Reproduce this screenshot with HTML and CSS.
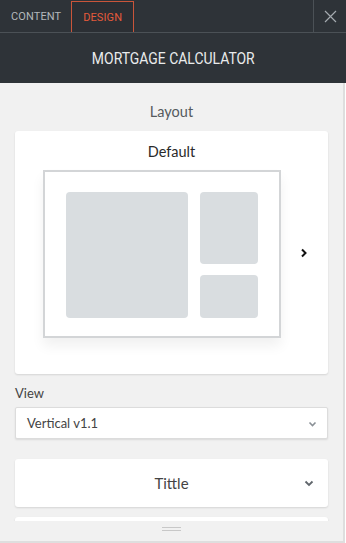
FILE: index.html
```html
<!DOCTYPE html>
<html>
<head>
<meta charset="utf-8">
<link rel="stylesheet" href="styles.css">
</head>
<body>
<div class="panel">
  <div class="tabs">
    <div class="tab">CONTENT</div>
    <div class="tab tab-active">DESIGN</div>
    <div class="tabs-spacer"></div>
    <div class="close">
      <svg width="13" height="13" viewBox="0 0 13 13"><path d="M1 1L12 12M12 1L1 12" stroke="#a4aaaf" stroke-width="1.2" fill="none"/></svg>
    </div>
  </div>
  <div class="title"><span class="title-text">MORTGAGE CALCULATOR</span></div>
  <div class="body">
    <div class="section-label">Layout</div>
    <div class="card layout-card">
      <div class="layout-name">Default</div>
      <div class="preview-row">
        <div class="preview">
          <div class="blk blk-main"></div>
          <div class="blk-col">
            <div class="blk blk-top"></div>
            <div class="blk blk-bottom"></div>
          </div>
        </div>
        <div class="next">
          <svg width="8" height="10" viewBox="0 0 8 10"><path d="M2 1.5L5.5 5L2 8.5" stroke="#111" stroke-width="2" fill="none"/></svg>
        </div>
      </div>
    </div>
    <div class="field-label">View</div>
    <div class="select">
      <span>Vertical v1.1</span>
      <svg width="9" height="6" viewBox="0 0 9 6"><path d="M1.5 1.5L4.5 4.5L7.5 1.5" stroke="#8a9096" stroke-width="1.6" fill="none"/></svg>
    </div>
    <div class="card acc">
      <span class="acc-title">Tittle</span>
      <svg class="acc-chev" width="10" height="7" viewBox="0 0 10 7"><path d="M1.5 1.5L5 5L8.5 1.5" stroke="#60666c" stroke-width="1.8" fill="none"/></svg>
    </div>
    <div class="card acc-next"></div>
    <div class="handle-bar"><div class="handle"></div></div>
  </div>
</div>
</body>
</html>
```
FILE: styles.css
```css
* { box-sizing: border-box; }
html, body { margin: 0; padding: 0; }
body { width: 346px; height: 543px; overflow: hidden; background: #fff; font-family: Lato, "Noto Sans", sans-serif; }
.panel { width: 346px; height: 543px; display: flex; flex-direction: column; }
.tabs { height: 33px; flex-shrink: 0; background: #2e3338; border-bottom: 1px solid #4b5156; display: flex; align-items: stretch; padding-top: 1px; }
.tab { font-family: Roboto, sans-serif; font-size: 11px; color: #b3b8bc; padding: 0 11px; display: flex; align-items: center; letter-spacing: 0.1px; }
.tab-active { color: #e35a3b; border: 1px solid #c9553a; border-bottom: none; margin-left: -1px; padding: 0 11px; background: #2b2f34; }
.tabs-spacer { flex: 1; }
.close { width: 33px; border-left: 1px solid #4b5156; display: flex; align-items: center; justify-content: center; margin-top: -1px; }
.title { height: 50px; flex-shrink: 0; background: #2e3338; display: flex; align-items: center; justify-content: center; }
.title-text { display: inline-block; font-family: Roboto, sans-serif; font-size: 17px; color: #e9ebec; transform: scaleX(0.82); letter-spacing: 0; white-space: nowrap; }
.body { flex: 1; background: #f1f1f1; border-right: 2px solid #dedede; border-bottom: 2px solid #dedede; margin-right: 1px; padding: 0 15px 0 15px; position: relative; overflow: hidden; display: flex; flex-direction: column; }
.body > * { flex-shrink: 0; }
.section-label { text-align: center; font-size: 14.5px; color: #555a5e; margin-top: 19px; height: 20px; line-height: 20px; }
.card { background: #fff; border-radius: 3px; box-shadow: 0 1px 2px rgba(0,0,0,0.12); }
.layout-card { margin-top: 9px; height: 243px; display: flex; flex-direction: column; align-items: stretch; }
.layout-name { text-align: center; font-size: 14.5px; color: #2a2a2a; margin-top: 12px; line-height: 18px; height: 18px; }
.preview-row { display: flex; align-items: center; margin-top: 9px; padding-left: 28px; }
.preview { width: 238px; height: 168px; border: 2px solid #d3d5d7; background: #fff; box-shadow: 0 8px 12px rgba(0,0,0,0.06); display: flex; padding: 20px 21px 18px 21px; gap: 12px; }
.blk { background: #d9dde0; border-radius: 4px; }
.blk-main { width: 122px; }
.blk-col { width: 58px; display: flex; flex-direction: column; gap: 11px; }
.blk-top { height: 72px; }
.blk-bottom { flex: 1; }
.next { margin-left: 19px; display: flex; align-items: center; margin-top: -3px; }
.field-label { font-size: 13px; color: #444; margin-top: 11px; line-height: 16px; height: 16px; }
.select { margin-top: 6px; height: 32px; background: #fff; border: 1px solid #dcdcdc; border-radius: 2px; box-shadow: 0 1px 2px rgba(0,0,0,0.1); display: flex; align-items: center; justify-content: space-between; padding: 0 10px 0 11px; font-size: 13px; color: #444; }
.select svg { margin-top: 2px; }
.acc { margin-top: 20px; height: 48px; position: relative; display: flex; align-items: center; justify-content: center; }
.acc-title { font-size: 15px; color: #444; }
.acc-chev { position: absolute; right: 14px; top: 21px; }
.acc-next { margin-top: 10px; height: 30px; }
.handle-bar { position: absolute; left: 0; right: 0; bottom: 0; height: 20px; background: #f1f1f1; display: flex; justify-content: center; padding-top: 6px; }
.handle { width: 19px; height: 4px; border-top: 1px solid #c8c8c8; border-bottom: 1px solid #c8c8c8; }
```
